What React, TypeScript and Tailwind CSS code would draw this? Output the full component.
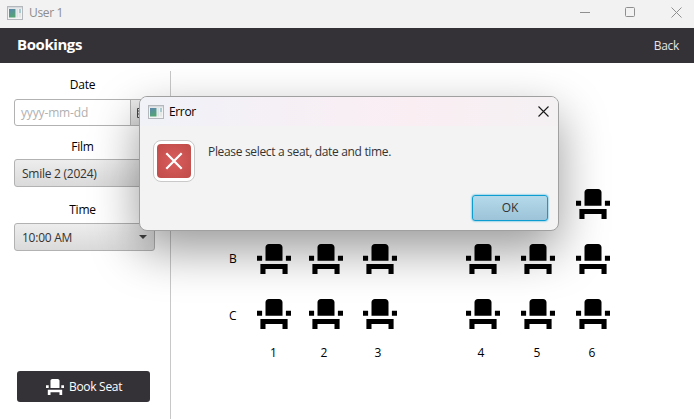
import React from "react";

const SEAT =
  "M4 18v3h3v-3h10v3h3v-6H4zM19 10h3v3h-3zM2 10h3v3H2zM17 13H7V5c0-1.1.9-2 2-2h6c1.1 0 2 .9 2 2z";

function Seat({ className }: { className: string }) {
  return (
    <svg viewBox="2 3 20 18" className={className} fill="currentColor" preserveAspectRatio="none">
      <path d={SEAT} />
    </svg>
  );
}

function AppIcon() {
  return (
    <svg width="16" height="14" viewBox="0 0 16 14" className="shrink-0">
      <defs>
        <linearGradient id="pane" x1="0" y1="0" x2="0.4" y2="1">
          <stop offset="0" stopColor="#5a86ae" />
          <stop offset="1" stopColor="#55a476" />
        </linearGradient>
      </defs>
      <rect x="0.5" y="0.5" width="15" height="13" fill="#f4f4f4" stroke="#b4b8bc" />
      <rect x="1" y="1" width="14" height="1.5" fill="#d5dade" />
      <rect x="2" y="3" width="6.5" height="8.5" fill="url(#pane)" />
      <rect x="9.3" y="3" width="2" height="8.5" fill="#dce3e6" />
      <rect x="12" y="3" width="2" height="4" fill="#a9cbd0" />
      <rect x="12" y="7" width="2" height="4.5" fill="#e4e9e6" />
    </svg>
  );
}

function Combo({ text }: { text: string }) {
  return (
    <div className="flex h-7 w-[141px] items-center justify-between rounded-[3px] border border-[#b2b2b2] bg-gradient-to-b from-[#ededed] to-[#dadada] pr-[7px] pl-[7px] text-[#333]">
      <span className="pt-[2px] tracking-[-0.25px]">{text}</span>
      <svg width="8" height="4" viewBox="0 0 8 4" fill="#444">
        <path d="M0 0h8L4 4z" />
      </svg>
    </div>
  );
}

const GRID = "grid grid-cols-[28px_52px_54px_103px_55px_55px_34px]";

export default function App() {
  return (
    <div className="relative flex h-[419px] w-[694px] flex-col overflow-hidden bg-white font-['Open_Sans','Noto_Sans',sans-serif] text-[12px] leading-4 text-black">
      <div className="flex h-7 shrink-0 items-center bg-[#f2f2f2] pr-3 pb-[3px] pl-[7px] text-[#8c8c8c]">
        <AppIcon />
        <span className="ml-[6px] grow tracking-[-0.35px]">User 1</span>
        <svg width="102" height="11" viewBox="0 0 102 11" fill="none" stroke="#8f8f8f">
          <path d="M0 5.5h10M91.5.5l10 10M101.5.5l-10 10" />
          <rect x="45.5" y="0.5" width="9" height="9" rx="1" />
        </svg>
      </div>
      <header className="flex h-[35px] shrink-0 items-center justify-between bg-[#353237] pr-[15px] pl-[17px] text-white">
        <h1 className="pb-[3px] text-[15px] leading-5 font-bold tracking-[-0.42px]">Bookings</h1>
        <span className="text-[#e4e4e4] tracking-[-0.3px]">Back</span>
      </header>
      <main className="flex grow pt-2">
        <aside className="flex w-[171px] flex-col border-r border-[#c8c8c8] pt-[6px] pl-[14px]">
          <div className="w-[137px] text-center tracking-[-0.2px]">Date</div>
          <div className="mt-[6px] flex h-[27px] w-[141px] rounded-[3px] border border-[#b2b2b2]">
            <span className="flex grow items-center pl-[6px] tracking-[-0.15px] text-[#b0b0b0]">yyyy-mm-dd</span>
            <span className="flex w-[24px] items-center justify-center border-l border-[#b2b2b2] bg-gradient-to-b from-[#ededed] to-[#dadada]">
              <svg width="11" height="10" viewBox="0 0 11 10" fill="none" stroke="#444">
                <path d="M.5.5h10v9H.5zM1 3h9M1 6h9M4 3v6M7 3v6" />
              </svg>
            </span>
          </div>
          <div className="mt-[13px] mb-[4px] w-[137px] text-center tracking-[-0.2px]">Film</div>
          <Combo text="Smile 2 (2024)" />
          <div className="mt-[15px] mb-[5px] w-[137px] text-center tracking-[-0.2px]">Time</div>
          <Combo text="10:00 AM" />
          <button className="mt-[120px] ml-[3px] flex h-[31px] w-[133px] items-center rounded-[3px] bg-[#353237] pl-[29px] text-white">
            <Seat className="h-4 w-[18px]" />
            <span className="ml-[5px] tracking-[-0.3px]">Book Seat</span>
          </button>
        </aside>
        <section className="flex flex-col pt-[118px] pl-[58px]">
          {["A", "B", "C"].map((row) => (
            <div key={row} className={`${GRID} h-[55px]`}>
              <span className={row === "C" ? "pt-[9px]" : "pt-[7px]"}>{row}</span>
              {[1, 2, 3, 4, 5, 6].map((n) => (
                <Seat key={n} className="h-[30px] w-[34px]" />
              ))}
            </div>
          ))}
          <div className={`${GRID} -mt-[9px]`}>
            <span />
            {[1, 2, 3, 4, 5, 6].map((n) => (
              <span key={n} className={n === 1 ? "w-[33px] text-center" : n > 1 && n < 5 ? "w-[30px] text-center" : "w-8 text-center"}>
                {n}
              </span>
            ))}
          </div>
        </section>
      </main>
      <div
        role="dialog"
        className="absolute top-[96px] left-[139px] flex h-[135px] w-[420px] flex-col overflow-hidden rounded-[8px] border border-[#a0a0a0] bg-[#f3f3f3] shadow-[0_19px_48px_rgba(0,0,0,0.4)]"
      >
        <div className="flex h-[29px] shrink-0 items-center bg-gradient-to-r from-[#f0f2f8] via-[#faeef3] via-65% to-[#f4f1f3] pr-[9px] pl-[8px]">
          <AppIcon />
          <span className="ml-[5px] grow pt-px tracking-[-0.35px]">Error</span>
          <svg width="11" height="11" viewBox="0 0 11 11" stroke="#1a1a1a" strokeWidth="1.1">
            <path d="M.5.5l10 10M10.5.5l-10 10" />
          </svg>
        </div>
        <div className="flex grow pt-[14px] pl-[13px]">
          <div className="flex size-[42px] items-center justify-center rounded-[8px] border border-[#c9c9c9] bg-white">
            <div className="flex size-[34px] items-center justify-center rounded-[4px] bg-[radial-gradient(circle,#d95c5c,#bf4c48)]">
              <svg width="18" height="18" viewBox="0 0 18 18" stroke="#fff" strokeWidth="2.2">
                <path d="M1.3 1.3l15.4 15.4M16.7 1.3L1.3 16.7" />
              </svg>
            </div>
          </div>
          <p className="mt-[4px] ml-[13px] text-[#333] tracking-[-0.33px]">Please select a seat, date and time.</p>
        </div>
        <button className="mr-[10px] mb-[9px] flex h-[26px] w-[76px] shrink-0 items-center justify-center self-end rounded-[3px] border border-[#0e9dd0] bg-gradient-to-b from-[#b4daea] to-[#9cc3d8] text-[#333] shadow-[0_0_2px_#039ed3]">
          OK
        </button>
      </div>
    </div>
  );
}
